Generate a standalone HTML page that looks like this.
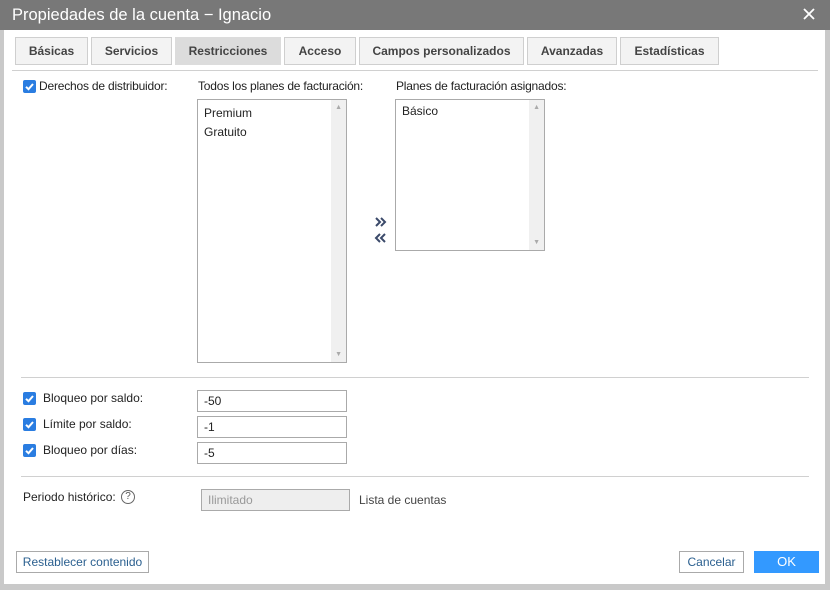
<!DOCTYPE html>
<html><head><meta charset="utf-8"><style>
*{box-sizing:border-box;margin:0;padding:0}
body{width:830px;height:590px;background:#c9c9c9;font-family:"Liberation Sans",Arial,sans-serif;font-size:12px;color:#222;position:relative;overflow:hidden}
.abs{position:absolute}
.title{left:0;top:0;width:830px;height:30px;background:#787878;color:#fff;font-size:16.5px;line-height:30px;padding-left:12px}
.x{right:14px;top:7px}
.main{left:4px;top:30px;width:821px;height:554px;background:#fff}
.tab{top:37px;height:28px;border:1px solid #cfcfcf;background:#f3f3f3;font-weight:bold;color:#444;font-size:12px;text-align:center;line-height:26px}
.tab.on{background:#dcdcdc;border-color:#dcdcdc}
.hr{height:1px;background:#d0d0d0}
.cb{width:13px;height:13px;background:#2a7de1;border-radius:2px}
.cb svg{display:block}
.list{border:1px solid #aaa;background:#fff}
.sb{right:0;top:0;bottom:0;width:15px;background:#f0f0f0}
.inp{border:1px solid #aaa;height:22px;width:150px;padding-left:6px;line-height:20px;font-size:12px}
.btn{border:1px solid #aaa;height:22px;line-height:20px;text-align:center;color:#2a5f8f;font-size:12px;background:#fff}
</style></head><body>
<div class="abs title">Propiedades de la cuenta − Ignacio</div>
<svg class="abs x" width="14" height="14"><path d="M2 2L12 12M12 2L2 12" stroke="#fff" stroke-width="1.8"/></svg>
<div class="abs main"></div>
<div class="abs tab" style="left:15px;width:73px">Básicas</div>
<div class="abs tab" style="left:91px;width:81px">Servicios</div>
<div class="abs tab on" style="left:175px;width:106px">Restricciones</div>
<div class="abs tab" style="left:284px;width:72px">Acceso</div>
<div class="abs tab" style="left:359px;width:165px">Campos personalizados</div>
<div class="abs tab" style="left:527px;width:90px">Avanzadas</div>
<div class="abs tab" style="left:620px;width:99px">Estadísticas</div>
<div class="abs hr" style="left:12px;top:70px;width:806px"></div>

<div class="abs cb" style="left:23px;top:80px"><svg width="13" height="13"><path d="M3 6.8L5.5 9.2 10 4" stroke="#fff" stroke-width="2" fill="none"/></svg></div>
<div class="abs" style="left:39px;top:79px;letter-spacing:-0.2px">Derechos de distribuidor:</div>
<div class="abs" style="left:198px;top:79px;letter-spacing:-0.2px">Todos los planes de facturación:</div>
<div class="abs" style="left:396px;top:79px;letter-spacing:-0.2px">Planes de facturación asignados:</div>
<div class="abs list" style="left:197px;top:99px;width:150px;height:264px"><div class="abs sb"></div>
<div class="abs" style="left:6px;top:6px">Premium</div><div class="abs" style="left:6px;top:25px">Gratuito</div>
<div class="abs" style="right:4px;top:4px;font-size:7px;color:#aaa">▲</div><div class="abs" style="right:4px;bottom:4px;font-size:7px;color:#aaa">▼</div></div>
<div class="abs list" style="left:395px;top:99px;width:150px;height:152px"><div class="abs sb"></div>
<div class="abs" style="left:6px;top:4px">Básico</div>
<div class="abs" style="right:4px;top:4px;font-size:7px;color:#aaa">▲</div><div class="abs" style="right:4px;bottom:4px;font-size:7px;color:#aaa">▼</div></div>
<svg class="abs" style="left:374px;top:216px" width="16" height="30"><path d="M2 2L6 6 2 10M7 2L11 6 7 10" stroke="#3b4a6a" stroke-width="2" fill="none"/><path d="M6 18L2 22 6 26M11 18L7 22 11 26" stroke="#3b4a6a" stroke-width="2" fill="none"/></svg>

<div class="abs hr" style="left:21px;top:377px;width:788px"></div>
<div class="abs cb" style="left:23px;top:392px"><svg width="13" height="13"><path d="M3 6.8L5.5 9.2 10 4" stroke="#fff" stroke-width="2" fill="none"/></svg></div>
<div class="abs" style="left:43px;top:391px">Bloqueo por saldo:</div>
<div class="abs inp" style="left:197px;top:390px">-50</div>
<div class="abs cb" style="left:23px;top:418px"><svg width="13" height="13"><path d="M3 6.8L5.5 9.2 10 4" stroke="#fff" stroke-width="2" fill="none"/></svg></div>
<div class="abs" style="left:43px;top:417px">Límite por saldo:</div>
<div class="abs inp" style="left:197px;top:416px">-1</div>
<div class="abs cb" style="left:23px;top:444px"><svg width="13" height="13"><path d="M3 6.8L5.5 9.2 10 4" stroke="#fff" stroke-width="2" fill="none"/></svg></div>
<div class="abs" style="left:43px;top:443px">Bloqueo por días:</div>
<div class="abs inp" style="left:197px;top:442px">-5</div>
<div class="abs hr" style="left:21px;top:476px;width:788px"></div>
<div class="abs" style="left:23px;top:490px">Periodo histórico:</div>
<div class="abs" style="left:121px;top:490px;width:14px;height:14px;border:1px solid #666;border-radius:50%;font-size:10px;text-align:center;line-height:12px;color:#555">?</div>
<div class="abs inp" style="left:201px;top:489px;background:#eee;color:#999;width:149px">Ilimitado</div>
<div class="abs" style="left:359px;top:493px;color:#444">Lista de cuentas</div>

<div class="abs btn" style="left:16px;top:551px;width:133px">Restablecer contenido</div>
<div class="abs btn" style="left:679px;top:551px;width:65px">Cancelar</div>
<div class="abs btn" style="left:754px;top:551px;width:65px;background:#3399ff;border-color:#3399ff;color:#fff;font-size:13px">OK</div>
</body></html>
